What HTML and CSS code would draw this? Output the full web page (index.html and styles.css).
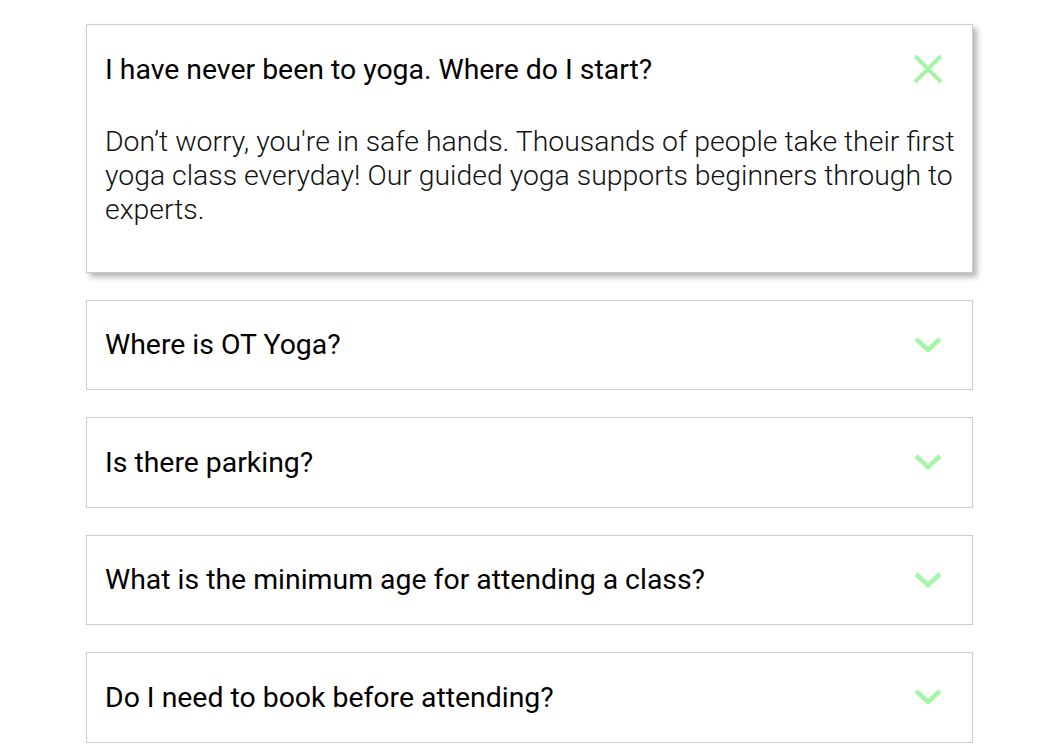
FILE: index.html
```html
<!DOCTYPE html>
<html lang="en">
<head>
<meta charset="utf-8">
<title>FAQ</title>
<link rel="stylesheet" href="styles.css">
</head>
<body>
<div class="faq">
  <div class="item open">
    <div class="head">
      <span class="q">I have never been to yoga. Where do I start?</span>
      <svg class="icon" width="32" height="32" viewBox="0 0 32 32"><path d="M3 3 L29 29 M29 3 L3 29" stroke="#a6f5a6" stroke-width="4" fill="none"/></svg>
    </div>
    <div class="answer">Don’t worry, you're in safe hands. Thousands of people take their first yoga class everyday! Our guided yoga supports beginners through to experts.</div>
  </div>
  <div class="item">
    <div class="head">
      <span class="q">Where is OT Yoga?</span>
      <svg class="icon" width="32" height="32" viewBox="0 0 32 32"><path d="M4 10 L16 21 L28 10" stroke="#a6f5a6" stroke-width="4.5" fill="none"/></svg>
    </div>
  </div>
  <div class="item">
    <div class="head">
      <span class="q">Is there parking?</span>
      <svg class="icon" width="32" height="32" viewBox="0 0 32 32"><path d="M4 10 L16 21 L28 10" stroke="#a6f5a6" stroke-width="4.5" fill="none"/></svg>
    </div>
  </div>
  <div class="item">
    <div class="head">
      <span class="q">What is the minimum age for attending a class?</span>
      <svg class="icon" width="32" height="32" viewBox="0 0 32 32"><path d="M4 10 L16 21 L28 10" stroke="#a6f5a6" stroke-width="4.5" fill="none"/></svg>
    </div>
  </div>
  <div class="item">
    <div class="head">
      <span class="q">Do I need to book before attending?</span>
      <svg class="icon" width="32" height="32" viewBox="0 0 32 32"><path d="M4 10 L16 21 L28 10" stroke="#a6f5a6" stroke-width="4.5" fill="none"/></svg>
    </div>
  </div>
</div>
</body>
</html>
```
FILE: styles.css
```css
html, body {
  margin: 0;
  padding: 0;
  background: #fff;
}
body {
  font-family: Roboto, "Liberation Sans", sans-serif;
}
.faq {
  width: 887px;
  margin: 24px 0 0 86px;
  display: flex;
  flex-direction: column;
  gap: 27px;
}
.item {
  border: 1px solid #cccccc;
  background: #fff;
}
.item.open {
  box-shadow: 4px 4px 6px rgba(0, 0, 0, 0.3);
}
.head {
  height: 88.5px;
  padding: 0 28px 0 18px;
  display: flex;
  align-items: center;
  justify-content: space-between;
}
.q {
  font-size: 28.4px;
  font-weight: 400;
  color: #000;
}
.answer {
  padding: 11px 8px 45px 18px;
  font-size: 28.4px;
  font-weight: 300;
  line-height: 34px;
  color: #111;
}
```
